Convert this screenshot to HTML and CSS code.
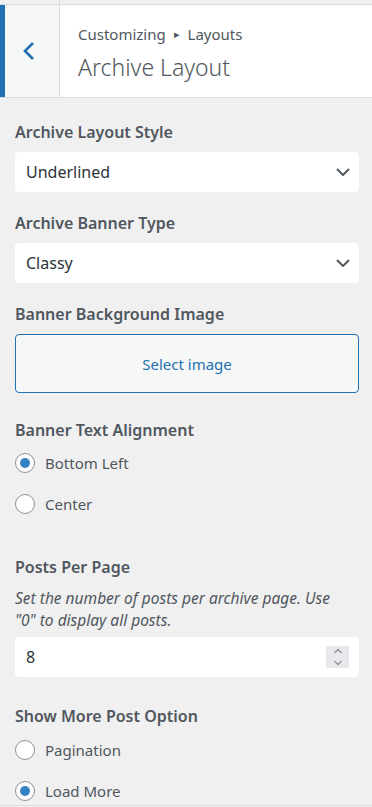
FILE: index.html
```html
<!DOCTYPE html>
<html lang="en">
<head>
    <meta charset="UTF-8">
    <meta name="viewport" content="width=device-width, initial-scale=1.0">
    <title>Archive Layout</title>
    <link rel="stylesheet" href="styles.css">
</head>
<body>
<div class="top-strip"><div class="top-strip-back"></div></div>
<header class="section-header">
    <div class="back-button">
        <svg width="20" height="20" viewBox="0 0 20 20">
            <path d="M14 2 L6 10 L14 18" fill="none" stroke="#2271b1" stroke-width="2.6"/>
        </svg>
    </div>
    <div class="section-title">
        <div class="breadcrumb">Customizing <span class="crumb-arrow">&#9656;</span> Layouts</div>
        <h3>Archive Layout</h3>
    </div>
</header>

<ul class="controls">
    <li class="control">
        <span class="control-title">Archive Layout Style</span>
        <div class="select">
            <span>Underlined</span>
            <svg width="14" height="8" viewBox="0 0 14 8">
                <path d="M1 1 L7 7 L13 1" fill="none" stroke="#50575e" stroke-width="2"/>
            </svg>
        </div>
    </li>
    <li class="control">
        <span class="control-title">Archive Banner Type</span>
        <div class="select">
            <span>Classy</span>
            <svg width="14" height="8" viewBox="0 0 14 8">
                <path d="M1 1 L7 7 L13 1" fill="none" stroke="#50575e" stroke-width="2"/>
            </svg>
        </div>
    </li>
    <li class="control control-image">
        <span class="control-title">Banner Background Image</span>
        <div class="upload-button">Select image</div>
    </li>
    <li class="control control-radio">
        <span class="control-title">Banner Text Alignment</span>
        <label class="radio-row"><span class="radio checked"></span>Bottom Left</label>
        <label class="radio-row"><span class="radio"></span>Center</label>
    </li>
    <li class="control control-number">
        <span class="control-title">Posts Per Page</span>
        <p class="description">Set the number of posts per archive page. Use "0" to display all posts.</p>
        <div class="number-input">
            <span>8</span>
            <div class="spinner">
                <svg width="10" height="18" viewBox="0 0 10 18">
                    <path d="M1.5 5 L5 1.5 L8.5 5" fill="none" stroke="#8f8f9d" stroke-width="1.3"/>
                    <path d="M1.5 13 L5 16.5 L8.5 13" fill="none" stroke="#8f8f9d" stroke-width="1.3"/>
                </svg>
            </div>
        </div>
    </li>
    <li class="control control-last">
        <span class="control-title">Show More Post Option</span>
        <label class="radio-row"><span class="radio"></span>Pagination</label>
        <label class="radio-row"><span class="radio checked"></span>Load More</label>
    </li>
</ul>
<div class="footer-line"></div>
</body>
</html>
```

FILE: styles.css
```css
* {
    margin: 0;
    padding: 0;
    box-sizing: border-box;
}

body {
    font-family: 'Noto Sans', 'Open Sans', sans-serif;
    background: #f0f0f1;
    color: #50575e;
    overflow: hidden;
}

/* 顶部 */
.top-strip {
    height: 4px;
    border-bottom: 1px solid #dcdcde;
    box-sizing: content-box;
}

.top-strip-back {
    width: 60px;
    height: 4px;
    border-right: 1px solid #dcdcde;
}

.section-header {
    display: flex;
    background: #fff;
    border-bottom: 1px solid #dcdcde;
    height: 93px;
}

.back-button {
    width: 60px;
    border-left: 5px solid #2271b1;
    border-right: 1px solid #dcdcde;
    background: #f6f7f7;
    display: flex;
    align-items: center;
    justify-content: center;
    padding-right: 6px;
}

.section-title {
    padding: 19px 0 0 18px;
}

.breadcrumb {
    font-size: 15px;
    line-height: 20px;
    color: #50575e;
}

.crumb-arrow {
    font-size: 11px;
    margin: 0 4px;
    vertical-align: 2px;
}

.section-title h3 {
    margin-top: 8px;
    font-size: 23px;
    line-height: 30px;
    font-weight: 300;
    color: #50575e;
}

/* 控件 */
.controls {
    list-style: none;
    padding: 22px 13px 0 15px;
}

.control {
    margin-bottom: 19px;
}

.control-image {
    margin-bottom: 25px;
}

.control-number {
    margin-bottom: 27px;
}

.control-radio {
    margin-bottom: 38px;
}

.control-last {
    margin-bottom: 0;
}

.control-title {
    display: block;
    font-size: 16px;
    line-height: 24px;
    font-weight: 600;
    color: #50575e;
    margin-bottom: 8px;
}

.control-last .control-title {
    margin-bottom: 9px;
}

.select {
    height: 40px;
    background: #fff;
    border-radius: 4px;
    display: flex;
    align-items: center;
    justify-content: space-between;
    padding: 0 9px 0 11px;
    font-size: 16px;
    color: #2c3338;
}

.upload-button {
    height: 59px;
    border: 1px solid #2271b1;
    border-radius: 4px;
    background: #f6f7f7;
    color: #2271b1;
    font-size: 15px;
    display: flex;
    align-items: center;
    justify-content: center;
}

.radio-row {
    display: flex;
    align-items: center;
    height: 26px;
    font-size: 15px;
    color: #50575e;
    margin-bottom: 15px;
}

.radio-row:last-child {
    margin-bottom: 0;
}

.radio {
    width: 20px;
    height: 20px;
    border: 1px solid #8c8f94;
    border-radius: 50%;
    background: #fff;
    margin-right: 10px;
    display: flex;
    align-items: center;
    justify-content: center;
}

.radio.checked::before {
    content: '';
    width: 10px;
    height: 10px;
    border-radius: 50%;
    background: #3582c4;
}

.description {
    max-width: 325px;
    font-size: 15.5px;
    line-height: 22px;
    font-style: italic;
    margin: 2px 0 6px;
}

.number-input {
    height: 40px;
    background: #fff;
    border-radius: 4px;
    display: flex;
    align-items: center;
    justify-content: space-between;
    padding: 0 10px 0 11px;
    font-size: 16px;
    color: #2c3338;
}

.spinner {
    width: 23px;
    height: 22px;
    background: #e9e9ed;
    display: flex;
    align-items: center;
    justify-content: center;
}

.footer-line {
    border-top: 1px solid #dcdcde;
    margin-top: 1px;
}
```
